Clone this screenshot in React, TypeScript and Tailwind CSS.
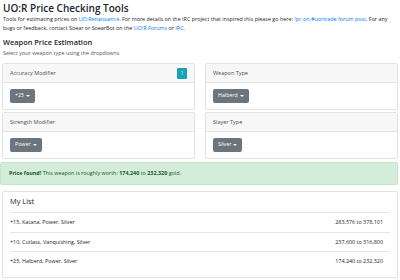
const link = "text-[#007bff]";

function Dropdown({ label }: { label: string }) {
  return (
    <button className="h-[14px] px-[5px] rounded-[2px] bg-[#6c757d] text-white text-[5.3px] flex items-center gap-[2px]">
      {label}
      <span className="inline-block w-0 h-0 border-l-[2px] border-r-[2px] border-t-[2.4px] border-l-transparent border-r-transparent border-t-white" />
    </button>
  );
}

function Card({ title, value, badge }: { title: string; value: string; badge?: boolean }) {
  return (
    <div className="border border-[#e3e3e3] rounded-[2px] bg-white">
      <div className="h-[19px] bg-[#f7f7f7] border-b border-[#e3e3e3] px-[7px] flex items-center justify-between text-[5.5px] text-[#495057]">
        <span>{title}</span>
        {badge && (
          <span className="w-[10px] h-[11px] rounded-[1px] bg-[#17a2b8] text-white text-[4.5px] flex items-center justify-center">
            1
          </span>
        )}
      </div>
      <div className="h-[26px] px-[7px] flex items-center">
        <Dropdown label={value} />
      </div>
    </div>
  );
}

const rows = [
  ["+15, Katana, Power, Silver", "283,576 to 378,101"],
  ["+10, Cutlass, Vanquishing, Silver", "237,600 to 316,800"],
  ["+25, Halberd, Power, Silver", "174,240 to 232,320"],
];

export default function App() {
  return (
    <div className="w-[400px] h-[280px] overflow-hidden bg-white text-[#212529] font-['Open_Sans',sans-serif] text-[5.4px] leading-[1.5]">
      <div className="pl-[3px] pr-[2px]">
        <h3 className="text-[10px] font-semibold leading-[12px] pt-[2px] mb-[1px]">UO:R Price Checking Tools</h3>
        <p className="leading-[9px]">
          Tools for estimating prices on <span className={link}>UO:Renaissance</span>. For more details on the IRC project that inspired this please go here: <span className={link}>!pc on #uortrade forum post</span>. For any bugs or feedback, contact Soear or SoearBot on the <span className={link}>UO:R Forums</span> or <span className={link}>IRC</span>.
        </p>
        <h5 className="text-[7.4px] font-semibold mt-[5px] leading-[9px]">Weapon Price Estimation</h5>
        <p className="mt-[2px] leading-[8px] text-[#555]">Select your weapon type using the dropdowns</p>
      </div>
      <div className="grid grid-cols-2 gap-x-[10px] gap-y-[2px] pl-[2px] pr-[2px] mt-[6px]">
        <Card title="Accuracy Modifier" value="+25" badge />
        <Card title="Weapon Type" value="Halberd" />
        <Card title="Strength Modifier" value="Power" />
        <Card title="Slayer Type" value="Silver" />
      </div>
      <div className="mt-[3px] mr-[2px] h-[23px] rounded-[2px] bg-[#d4edda] border border-[#c3e6cb] text-[#155724] px-[8px] flex items-center">
        <span>
          <b>Price found!</b> This weapon is roughly worth: <b>174,240</b> to <b>232,320</b> gold.
        </span>
      </div>
      <div className="mt-[6px] mx-[2px] border border-[#e3e3e3] rounded-[2px] px-[7px] pb-[6px]">
        <h5 className="text-[7.4px] font-medium h-[20px] flex items-center">My List</h5>
        <ul>
          {rows.map(([name, price]) => (
            <li key={name} className="h-[19.5px] border-t border-[#e6e6e6] flex items-center justify-between pr-[7px]">
              <span>{name}</span>
              <span>{price}</span>
            </li>
          ))}
        </ul>
      </div>
    </div>
  );
}
